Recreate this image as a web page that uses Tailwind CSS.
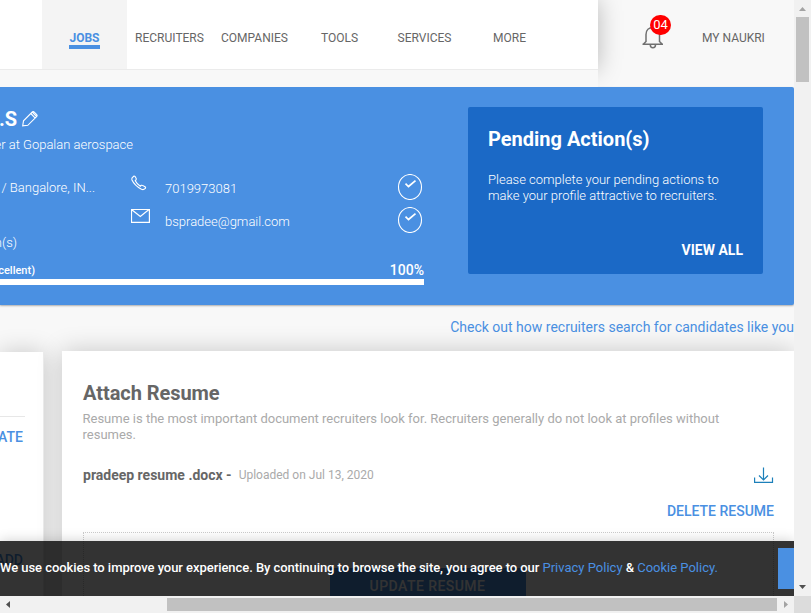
<!DOCTYPE html>
<html lang="en">
<head>
<meta charset="utf-8">
<title>Profile</title>
<script src="https://cdn.jsdelivr.net/npm/@tailwindcss/browser@4"></script>
</head>
<body class="w-[811px] h-[613px] overflow-hidden font-['Roboto','Liberation_Sans',sans-serif] text-[#666]">
<div class="grid grid-cols-[794px_17px] grid-rows-[596px_17px] whitespace-nowrap">
  <div class="relative overflow-hidden bg-[#f8f8f8] flex flex-col">
    <header class="h-[87px] shrink-0 flex text-[12px] leading-[16px] overflow-hidden">
      <div class="w-[598px] shrink-0">
        <nav class="h-[70px] bg-white border-b border-[#ebebeb] pl-[42px] flex text-center shadow-[0_0_24px_rgba(0,0,0,0.26)]">
          <a class="w-[85px] bg-[#f4f4f4] pt-[30px] flex flex-col items-center text-[#4a90e2] font-bold"><span class="w-[31px] h-[19px] border-b-4 border-[#4a90e2] leading-[16px]">JOBS</span></a>
          <a class="w-[85px] pt-[30px]">RECRUITERS</a>
          <a class="w-[85px] pt-[30px]">COMPANIES</a>
          <a class="w-[85px] pt-[30px]">TOOLS</a>
          <a class="w-[85px] pt-[30px]">SERVICES</a>
          <a class="w-[85px] pt-[30px]">MORE</a>
        </nav>
        <div class="relative h-[17px] bg-[#f8f8f8]"></div>
      </div>
      <div class="relative ml-[43px] mt-[25px] w-[24px] h-[24px]">
        <svg class="block" width="24" height="24" viewBox="0 0 24 24" fill="none" stroke="#707070" stroke-width="1.5"><path d="M1.500 19.300H22M2.500 19L5 16.500V9.500C5 5 8 2.500 12 2.500s6.500 2.500 6.500 7V16.500L21 19M9.300 19.800c0 4 5.200 4 5.200 0"/></svg>
        <span class="absolute left-[9px] top-[-10px] w-[21px] h-[20px] rounded-full bg-[#f00] text-white text-[13px] leading-[20px] text-center">04</span>
      </div>
      <span class="ml-[37px] pt-[30px]">MY NAUKRI</span>
    </header>

    <section class="h-[218px] shrink-0 bg-[#4a90e2] rounded-r-[2px] shadow-[0_1px_2px_rgba(0,0,0,0.3)] text-white flex">
      <div class="w-[468px] shrink-0 pt-[20px]">
        <div class="h-[24px] flex items-center">
          <span class="w-[17px] flex justify-end text-[20px] leading-[24px] font-bold">L.S</span>
          <svg class="ml-[5px]" width="16" height="16" viewBox="0 0 16 16" fill="none" stroke="#fff" stroke-width="1.1"><path d="M.7 14.800L1.500 9.800L10.500.8Q11.500.3 12.500 1.300L14.700 3.500Q15.500 4.500 14.800 5.300L5.800 14.300ZM8.800 2.500L13 6.800M10.300 1.200L14.600 5.500"/></svg>
        </div>
        <div class="mt-[5px] w-[133px] flex justify-end text-[13px] leading-[18px] font-light">Engineer at Gopalan aerospace</div>
        <div class="mt-[19px] h-[66px] flex">
          <div class="w-[95px] mr-[36px] pt-[6px] flex justify-end text-[13px] leading-[18px] font-light">Bengaluru / Bangalore, IN...</div>
          <div class="w-[34px] shrink-0 flex flex-col pt-[2px]">
            <svg width="16" height="16" viewBox="0 0 16 16" fill="none" stroke="#fff" stroke-width="1.1"><path d="M1.300 2.700L3 1Q4 .8 5 3Q5.500 4 5 5L4.300 5.700Q5.500 8.500 9.300 11.200L10.300 10.300Q11.500 9.800 14.300 12Q15 12.700 14 13.700Q12.500 15.200 10.500 14.300Q3.500 10.500 1 5Q.6 3.500 1.300 2.700Z"/></svg>
            <svg class="mt-[18px]" width="19" height="14" viewBox="0 0 19 14" fill="none" stroke="#fff" stroke-width="1.2"><path d="M.5.5H18.400V13.400H.5ZM.5.5L9.300 7.500L18 .5"/></svg>
          </div>
          <div class="w-[232px] shrink-0 text-[13px] leading-[18px] font-light pt-[7px]"><div class="mb-[15px]">7019973081</div><div>bspradee@gmail.com</div></div>
          <div class="flex flex-col gap-[7px] pt-[1px]">
            <svg width="26" height="26" viewBox="0 0 26 26" fill="none" stroke="#fff"><rect x="1.500" y=".5" width="23" height="25" rx="11.500" ry="12.500" stroke-width="1.100"/><path d="M8.500 9.700L11.500 12.500L18.500 6.700" stroke-width="1.700"/></svg>
            <svg width="26" height="26" viewBox="0 0 26 26" fill="none" stroke="#fff"><rect x="1.500" y=".5" width="23" height="25" rx="11.500" ry="12.500" stroke-width="1.100"/><path d="M8.500 9.700L11.500 12.500L18.500 6.700" stroke-width="1.700"/></svg>
          </div>
        </div>
        <div class="w-[17px] mt-[-5px] flex justify-end text-[13px] leading-[18px] font-light">Month(s)</div>
        <div class="mt-[8px] w-[424px] h-[20px] flex justify-between"><span class="w-[35px] flex justify-end text-[11px] leading-[22px] font-medium">(Excellent)</span><span class="text-[14px] leading-[20px] font-medium">100%</span></div>
        <div class="mt-[-1px] w-[424px] h-[6px] bg-white"></div>
      </div>
      <div class="mt-[20px] w-[295px] h-[167px] bg-[#1b69c6] rounded-[2px] px-[20px] pt-[20px]">
        <h2 class="text-[20px] leading-[24px] font-bold">Pending Action(s)</h2>
        <p class="mt-[21px] text-[13px] leading-[16px] font-light">Please complete your pending actions to<br>make your profile attractive to recruiters.</p>
        <div class="mt-[37px] text-right text-[14px] leading-[18px] font-bold">VIEW ALL</div>
      </div>
    </section>

    <div class="h-[46px] shrink-0 pt-[13px] text-right text-[14px] leading-[18px] text-[#4a90e2]">Check out how recruiters search for candidates like you</div>

    <main class="flex gap-[18px] grow">
      <aside class="mt-[1px] w-[44px] shrink-0 h-[400px] bg-white border-r border-[#ececec] shadow-[0_0_24px_rgba(0,0,0,0.2)] text-[14px] leading-[18px] font-medium text-[#4a90e2]">
        <div class="h-[65px] w-[25px] border-b border-[#e7e7e7]"></div>
        <div class="mt-[11px] w-[23px] flex justify-end">UPDATE</div>
        <div class="mt-[105px] w-[23px] flex justify-end">ADD</div>
      </aside>
      <section class="w-[732px] shrink-0 h-[400px] bg-white shadow-[0_0_24px_rgba(0,0,0,0.2)] pl-[21px] pt-[30px] pr-[20px]">
        <h2 class="text-[20px] leading-[24px] font-bold tracking-[-0.06px]">Attach Resume</h2>
        <p class="mt-[6px] ml-[-0.5px] text-[13px] leading-[16px] text-[#aaa]">Resume is the most important document recruiters look for. Recruiters generally do not look at profiles without<br>resumes.</p>
        <div class="mt-[22px] h-[20px] w-[691px] flex items-center">
          <span class="text-[14px] leading-[20px] font-bold">pradeep resume .docx -</span>
          <span class="ml-[7px] text-[12px] leading-[20px] text-[#aaa]">Uploaded on Jul 13, 2020</span>
          <svg class="ml-auto" width="20" height="17" viewBox="0 0 20 17" fill="none" stroke="#1c80ba" stroke-width="1.200"><path d="M.6 10.500V15.400H18.500V10.500M9.500 .5V13M5 8.500L9.500 13L14 8.500"/></svg>
        </div>
        <div class="mt-[17px] w-[691px] text-right text-[14px] leading-[18px] font-medium text-[#4a90e2]">DELETE RESUME</div>
        <div class="mt-[12px] w-[691px] h-[100px] border border-dotted border-[#ccc] pt-[35px] pr-[2px] flex justify-center items-start">
          <div class="w-[196px] h-[40px] bg-[#4a90e2] text-white text-[14px] leading-[37px] tracking-[0.45px] text-center font-medium">UPDATE RESUME</div>
        </div>
      </section>
    </main>

    <div class="absolute left-0 bottom-0 w-[794px] h-[55px] bg-black/80 shadow-[0_0_12px_rgba(0,0,0,0.2)] flex justify-between text-[13px] leading-[18px]">
      <p class="pt-[18px] text-white font-medium tracking-[-0.055px]">We use cookies to improve your experience. By continuing to browse the site, you agree to our <a class="font-normal text-[#4a90e2] tracking-normal">Privacy Policy</a> &amp; <a class="font-normal text-[#4a90e2] tracking-normal">Cookie Policy.</a></p>
      <div class="mt-[7px] w-[16px] h-[41px] bg-[#4a90e2]"></div>
    </div>
  </div>

  <div class="bg-[#f1f1f1] flex flex-col items-center">
    <svg width="17" height="17" viewBox="0 0 17 17"><path d="M5 11H12L8.500 7Z" fill="#a3a3a3"/></svg>
    <div class="w-[13px] h-[65px] bg-[#c1c1c1]"></div>
    <svg class="mt-auto" width="17" height="17" viewBox="0 0 17 17"><path d="M5 6H12L8.500 10Z" fill="#505050"/></svg>
  </div>
  <div class="bg-[#f1f1f1] flex items-center">
    <svg width="17" height="17" viewBox="0 0 17 17"><path d="M10 5V12L6 8.500Z" fill="#505050"/></svg>
    <div class="ml-[150px] w-[610px] h-[13px] bg-[#c1c1c1]"></div>
    <svg width="17" height="17" viewBox="0 0 17 17"><path d="M7 5V12L11 8.500Z" fill="#a3a3a3"/></svg>
  </div>
  <div class="bg-[#dcdcdc]"></div>
</div>
</body>
</html>
